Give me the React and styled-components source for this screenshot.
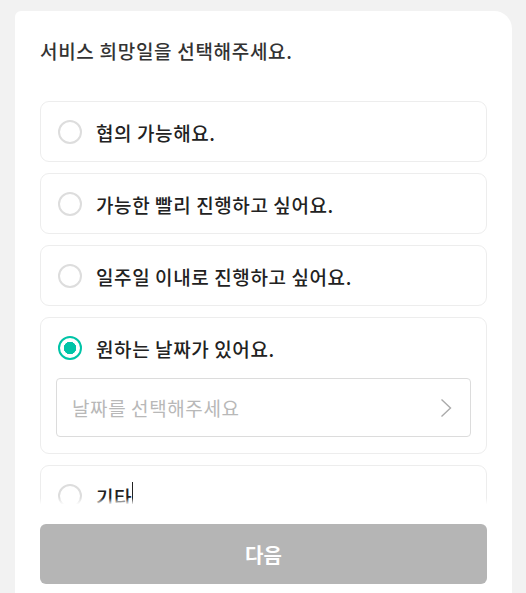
import React from "react";
import styled, { createGlobalStyle } from "styled-components";

const GlobalStyle = createGlobalStyle`
  html, body {
    margin: 0;
    padding: 0;
    background: #f2f2f2;
    font-family: "Noto Sans CJK KR", "Noto Sans", sans-serif;
  }
`;

const options = [
  { id: 1, label: "협의 가능해요." },
  { id: 2, label: "가능한 빨리 진행하고 싶어요." },
  { id: 3, label: "일주일 이내로 진행하고 싶어요." },
  { id: 4, label: "원하는 날짜가 있어요.", selected: true, datePicker: true },
  { id: 5, label: "기타", caret: true },
];

const App = () => {
  return (
    <>
      <GlobalStyle />
      <Page>
        <Card>
          <Title>서비스 희망일을 선택해주세요.</Title>
          <ListWrap>
            <List>
              {options.map((opt) => (
                <Option key={opt.id}>
                  <OptionRow>
                    <Radio $checked={opt.selected} />
                    <Label>
                      {opt.label}
                      {opt.caret && <Caret />}
                    </Label>
                  </OptionRow>
                  {opt.datePicker && (
                    <DateField>
                      <Placeholder>날짜를 선택해주세요</Placeholder>
                      <svg width="12" height="20" viewBox="0 0 12 20" fill="none">
                        <path d="M1.5 1.5 L10.5 10 L1.5 18.5" stroke="#aaaaaa" strokeWidth="1.4" />
                      </svg>
                    </DateField>
                  )}
                </Option>
              ))}
            </List>
          </ListWrap>
          <NextButton disabled>다음</NextButton>
        </Card>
      </Page>
    </>
  );
};

const Page = styled.div`
  padding: 11px 14px 0 15px;
  height: 582px;
  overflow: hidden;
`;

const Card = styled.div`
  background: #ffffff;
  border-radius: 6px 18px 0 0;
  height: 100%;
  padding: 27px 25px 0;
  box-sizing: border-box;
`;

const Title = styled.h2`
  margin: 0;
  font-size: 19px;
  line-height: 26px;
  font-weight: 500;
  letter-spacing: 0.7px;
  color: #333333;
`;

const ListWrap = styled.div`
  position: relative;
  margin-top: 37px;
  height: 403px;
  overflow: hidden;

  &::after {
    content: "";
    position: absolute;
    left: 0;
    right: 0;
    bottom: 0;
    height: 6px;
    background: linear-gradient(rgba(255, 255, 255, 0), rgba(255, 255, 255, 0.9));
  }
`;

const List = styled.div`
  display: flex;
  flex-direction: column;
  gap: 11px;
`;

const Option = styled.div`
  border: 1px solid #ededed;
  border-radius: 9px;
  padding: 17px 15px 16px;
  display: flex;
  flex-direction: column;
  gap: 17px;
`;

const OptionRow = styled.div`
  display: flex;
  align-items: center;
  gap: 14px;
  height: 26px;
  padding-left: 2px;
`;

const Radio = styled.span`
  width: 24px;
  height: 24px;
  box-sizing: border-box;
  border-radius: 50%;
  border: 2px solid ${(p) => (p.$checked ? "#00c4a7" : "#dddddd")};
  background: ${(p) =>
    p.$checked ? "radial-gradient(circle, #00c4a7 0 6px, #ffffff 6.5px)" : "#ffffff"};
  flex-shrink: 0;
`;

const Label = styled.span`
  display: flex;
  align-items: center;
  font-size: 19px;
  font-weight: 500;
  color: #222222;
  letter-spacing: 0.6px;
`;

const Caret = styled.span`
  display: inline-block;
  width: 1px;
  height: 28px;
  background: #222222;
`;

const DateField = styled.div`
  display: flex;
  align-items: center;
  justify-content: space-between;
  height: 59px;
  box-sizing: border-box;
  border: 1px solid #dcdcdc;
  border-radius: 4px;
  padding: 0 18px 0 15px;
`;

const Placeholder = styled.span`
  font-size: 19px;
  letter-spacing: 0.6px;
  color: #b8b8b8;
`;

const NextButton = styled.button`
  display: block;
  width: 100%;
  height: 60px;
  margin-top: 20px;
  border: none;
  border-radius: 6px;
  background: #b5b5b5;
  color: #ffffff;
  font-family: inherit;
  font-size: 20px;
  font-weight: 700;
`;

export default App;
